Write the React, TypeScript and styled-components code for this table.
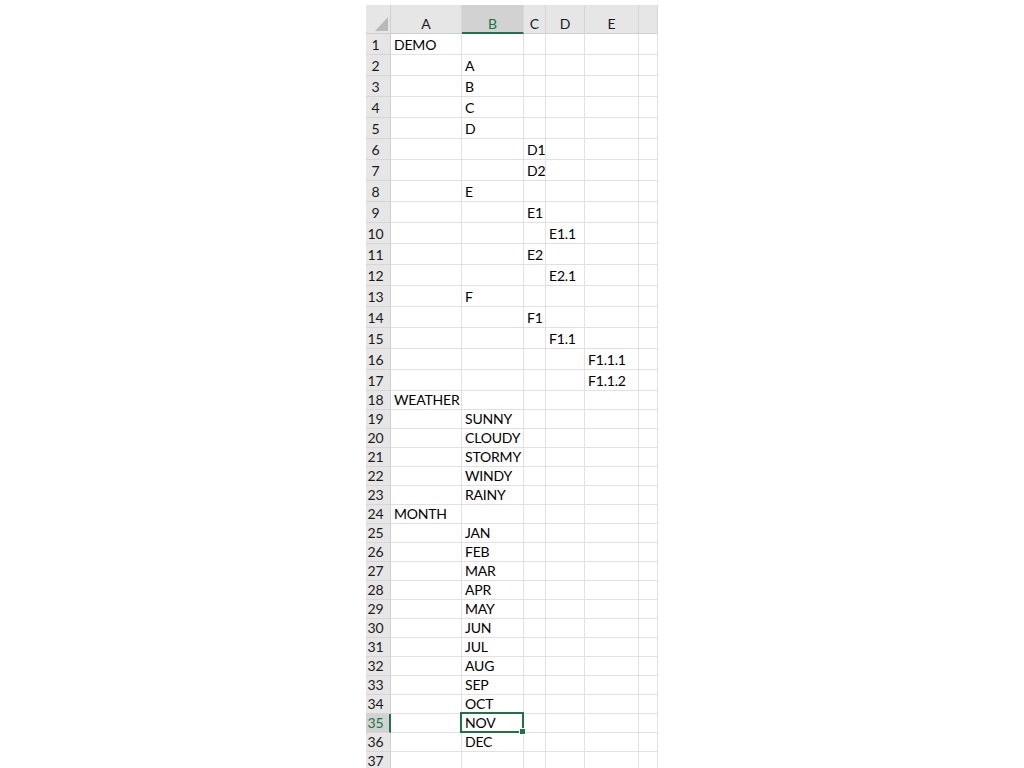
import React from "react";
import styled, { createGlobalStyle } from "styled-components";

const GlobalStyle = createGlobalStyle`
  html, body { margin: 0; padding: 0; background: #ffffff; }
  body { font-family: Lato, "Open Sans", sans-serif; }
`;

const COLS = "25px 71px 62px 22px 39px 54px 19px";
const GREEN = "#217346";

const Sheet = styled.div`
  margin: 5px 0 0 366px;
  width: 292px;
  height: 763px;
  overflow: hidden;
  display: flex;
  flex-direction: column;
  background: #ffffff;
`;

const HeaderRow = styled.div`
  display: grid;
  grid-template-columns: ${COLS};
  height: 29px;
  flex: none;
`;

const Corner = styled.div`
  background: #e6e6e6;
  border-right: 1px solid #cfcfcf;
  border-bottom: 1px solid #cfcfcf;
  box-sizing: border-box;
  display: flex;
  align-items: flex-end;
  justify-content: flex-end;
  padding: 0 2px 2px 0;
`;

const ColHead = styled.div<{ $sel?: boolean }>`
  box-sizing: border-box;
  background: ${(p) => (p.$sel ? "#d2d2d2" : "#e6e6e6")};
  color: ${(p) => (p.$sel ? GREEN : "#1a1a1a")};
  border-right: 1px solid #d6d6d6;
  border-bottom: ${(p) => (p.$sel ? `2px solid ${GREEN}` : "1px solid #cfcfcf")};
  font-size: 14px;
  display: flex;
  justify-content: center;
  align-items: flex-start;
  padding-top: 12px;
  line-height: 14px;
  overflow: hidden;
`;

const Row = styled.div<{ $h: number }>`
  display: grid;
  grid-template-columns: ${COLS};
  height: ${(p) => p.$h}px;
  flex: none;
`;

const RowHead = styled.div<{ $sel?: boolean; $short?: boolean }>`
  box-sizing: border-box;
  background: ${(p) => (p.$sel ? "#d2d2d2" : "#e6e6e6")};
  color: ${(p) => (p.$sel ? GREEN : "#1a1a1a")};
  border-bottom: 1px solid #d6d6d6;
  border-right: ${(p) => (p.$sel ? `2px solid ${GREEN}` : "1px solid #cfcfcf")};
  font-size: 14px;
  display: flex;
  align-items: center;
  justify-content: center;
  padding-right: 5px;
  padding-bottom: ${(p) => (p.$short ? "1px" : "0")};
  padding-left: ${(p) => (p.$sel ? "1px" : "0")};
`;

const Cell = styled.div<{ $sel?: boolean; $short?: boolean }>`
  position: relative;
  box-sizing: border-box;
  border-right: 1px solid #e1e1e1;
  border-bottom: 1px solid #e1e1e1;
  font-size: 14px;
  letter-spacing: -0.2px;
  color: #000000;
  display: flex;
  align-items: center;
  padding-left: 3px;
  padding-bottom: ${(p) => (p.$short ? "1px" : "0")};
  white-space: nowrap;
  overflow: visible;
  z-index: ${(p) => (p.$sel ? 2 : 1)};
`;

const Selection = styled.div`
  position: absolute;
  top: -2px;
  left: -2px;
  right: -1px;
  bottom: -1px;
  border: 2px solid ${GREEN};
  pointer-events: none;
`;

const FillHandle = styled.div`
  position: absolute;
  right: -4px;
  bottom: -4px;
  width: 5px;
  height: 5px;
  background: ${GREEN};
  border: 1px solid #ffffff;
`;

const CellText = styled.span`
  position: relative;
  z-index: 3;
`;

type RowData = { n: number; col?: number; text?: string };

const data: RowData[] = [
  { n: 1, col: 0, text: "DEMO" },
  { n: 2, col: 1, text: "A" },
  { n: 3, col: 1, text: "B" },
  { n: 4, col: 1, text: "C" },
  { n: 5, col: 1, text: "D" },
  { n: 6, col: 2, text: "D1" },
  { n: 7, col: 2, text: "D2" },
  { n: 8, col: 1, text: "E" },
  { n: 9, col: 2, text: "E1" },
  { n: 10, col: 3, text: "E1.1" },
  { n: 11, col: 2, text: "E2" },
  { n: 12, col: 3, text: "E2.1" },
  { n: 13, col: 1, text: "F" },
  { n: 14, col: 2, text: "F1" },
  { n: 15, col: 3, text: "F1.1" },
  { n: 16, col: 4, text: "F1.1.1" },
  { n: 17, col: 4, text: "F1.1.2" },
  { n: 18, col: 0, text: "WEATHER" },
  { n: 19, col: 1, text: "SUNNY" },
  { n: 20, col: 1, text: "CLOUDY" },
  { n: 21, col: 1, text: "STORMY" },
  { n: 22, col: 1, text: "WINDY" },
  { n: 23, col: 1, text: "RAINY" },
  { n: 24, col: 0, text: "MONTH" },
  { n: 25, col: 1, text: "JAN" },
  { n: 26, col: 1, text: "FEB" },
  { n: 27, col: 1, text: "MAR" },
  { n: 28, col: 1, text: "APR" },
  { n: 29, col: 1, text: "MAY" },
  { n: 30, col: 1, text: "JUN" },
  { n: 31, col: 1, text: "JUL" },
  { n: 32, col: 1, text: "AUG" },
  { n: 33, col: 1, text: "SEP" },
  { n: 34, col: 1, text: "OCT" },
  { n: 35, col: 1, text: "NOV" },
  { n: 36, col: 1, text: "DEC" },
  { n: 37 },
];

const letters = ["A", "B", "C", "D", "E", ""];
const SEL_ROW = 35;
const SEL_COL = 1;

export default function App() {
  return (
    <>
      <GlobalStyle />
      <Sheet>
        <HeaderRow>
          <Corner>
            <svg width="13" height="14" viewBox="0 0 13 14">
              <polygon points="13,0 13,14 0,14" fill="#b9b9b9" />
            </svg>
          </Corner>
          {letters.map((l, i) => (
            <ColHead key={i} $sel={i === SEL_COL}>
              {l}
            </ColHead>
          ))}
        </HeaderRow>
        {data.map((r) => {
          const short = r.n > 17;
          return (
            <Row key={r.n} $h={short ? 19 : 21}>
              <RowHead $sel={r.n === SEL_ROW} $short={short}>
                {r.n}
              </RowHead>
              {letters.map((_, ci) => {
                const sel = r.n === SEL_ROW && ci === SEL_COL;
                return (
                  <Cell key={ci} $sel={sel} $short={short}>
                    {r.col === ci && r.text ? <CellText>{r.text}</CellText> : null}
                    {sel && (
                      <Selection>
                        <FillHandle />
                      </Selection>
                    )}
                  </Cell>
                );
              })}
            </Row>
          );
        })}
      </Sheet>
    </>
  );
}
